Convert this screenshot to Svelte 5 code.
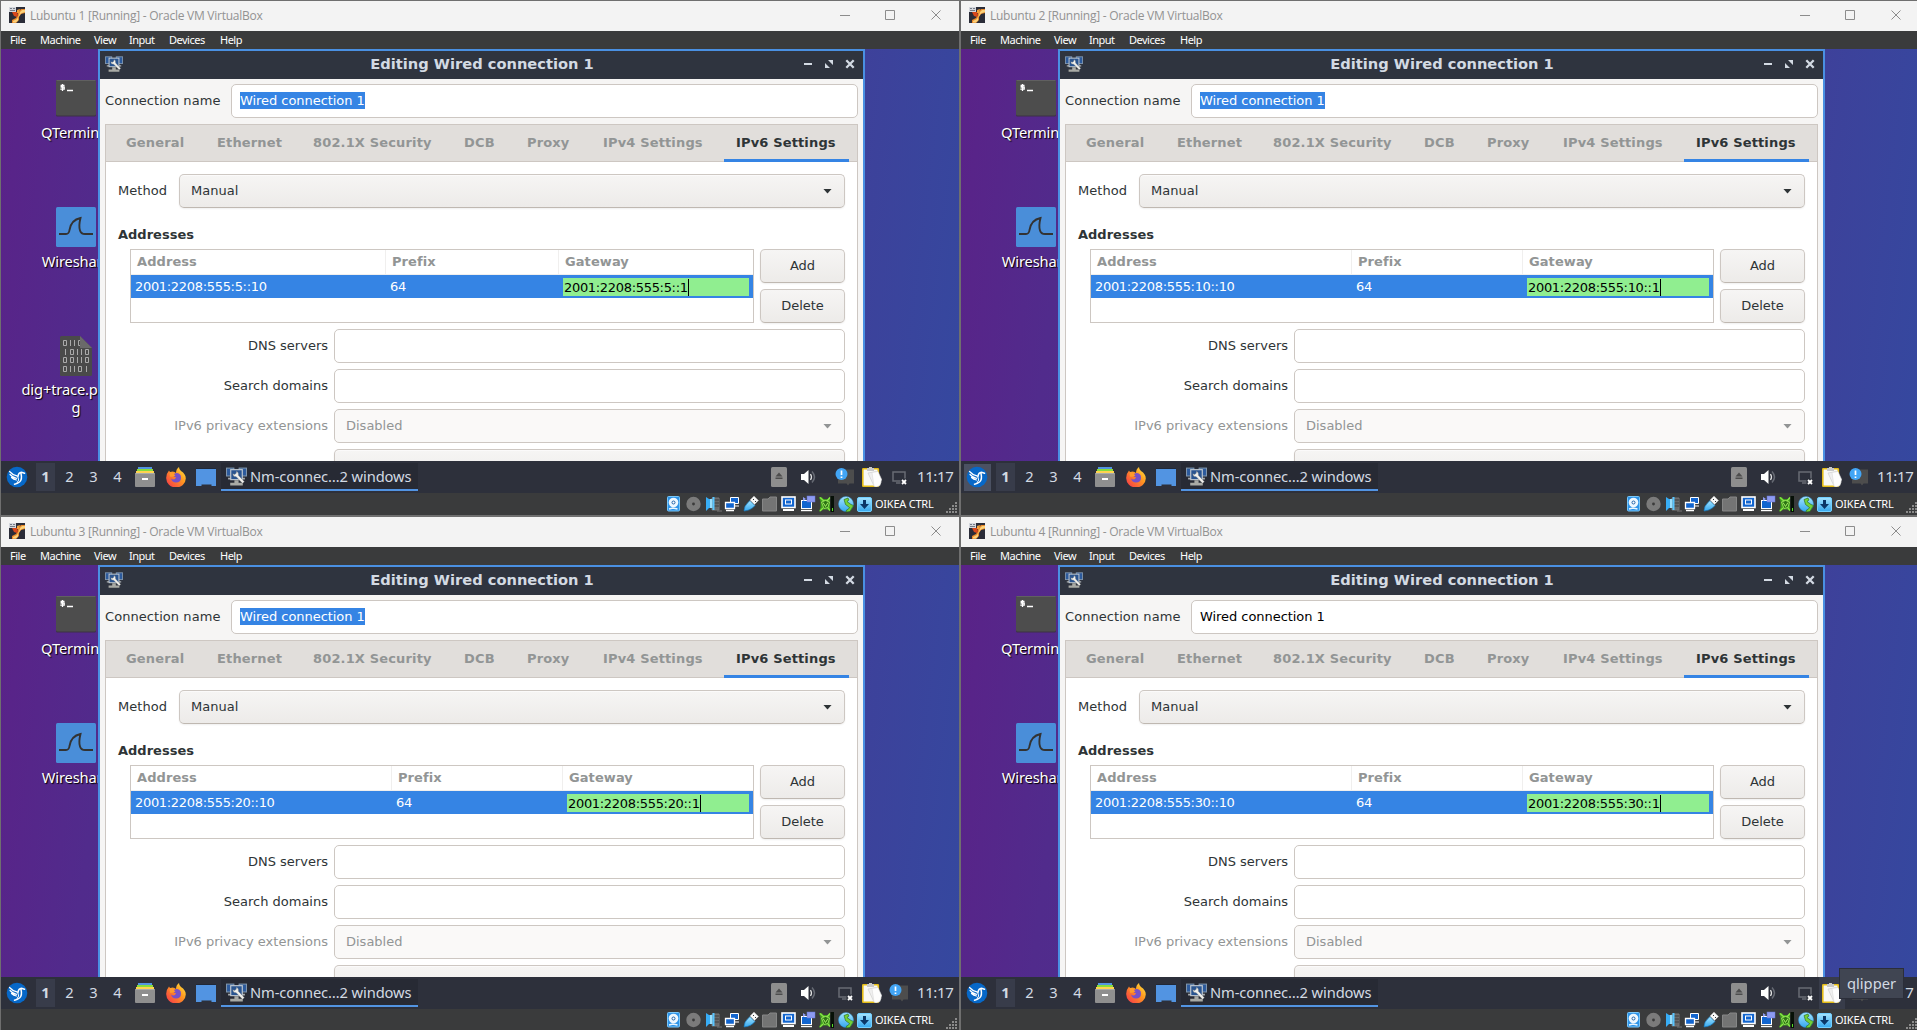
<script>
  const machines = [
    { id: 1, address: '2001:2208:555:5::10', gateway: '2001:2208:555:5::1', cols: [255, 173], selected: true, files: true, tray: ['notice', 'clip', 'net'] },
    { id: 2, address: '2001:2208:555:10::10', gateway: '2001:2208:555:10::1', cols: [261, 171], selected: true, startHover: true, tray: ['net', 'clip', 'notice'] },
    { id: 3, address: '2001:2208:555:20::10', gateway: '2001:2208:555:20::1', cols: [261, 171], selected: true, tray: ['net', 'clip', 'notice'] },
    { id: 4, address: '2001:2208:555:30::10', gateway: '2001:2208:555:30::1', cols: [261, 171], selected: false, tip: true, tray: ['net', 'clip', 'notice'] }
  ];
  const menu = ['File', 'Machine', 'View', 'Input', 'Devices', 'Help'];
  const tabs = ['General', 'Ethernet', '802.1X Security', 'DCB', 'Proxy', 'IPv4 Settings', 'IPv6 Settings'];
</script>

{#snippet vboxIcon()}
  <svg class="vbox" width="16" height="16" viewBox="0 0 16 16">
    <rect width="16" height="16" fill="#2a2c38" />
    <path d="M16 2v4l-4 1-2 3v3l-3 3H3v-3l4-2 2-3V5l3-3z" fill="#e8892b" />
    <path d="M16 3v2l-4 1.500-3 4v3l-2 2H4v-1.500l4-2 2-4 1-3 2-2z" fill="#fbd27a" />
    <path d="M3 5h5l1 3-1 2-3-1z" fill="#d8481d" />
    <path d="M8 3l3-1-1 4H8z" fill="#f4a23a" />
    <rect width="7" height="5" fill="#d5d8de" />
    <path d="M1 1.500h2M4 1.500h2M1 3.500h5" stroke="#777d88" />
  </svg>
{/snippet}

{#snippet netTool(size)}
  <svg width={size} height={size} viewBox="0 0 20 20">
    <rect x="0.500" y="2" width="7" height="7.500" fill="#2c5a9c" stroke="#7f95ad" />
    <rect x="12.500" y="2" width="7" height="7.500" fill="#2c5a9c" stroke="#7f95ad" />
    <path d="M2 12h3.500M14.500 12H18" stroke="#a9adb0" stroke-width="1.500" />
    <rect x="4.500" y="3.500" width="11" height="9.500" fill="#2a5591" stroke="#c2cad1" stroke-width="1.100" />
    <path d="M8 13.500h4v2.500h4v2.500H4V16h4z" fill="#a9aaa5" />
    <path d="M10 5l-.3 2-1.500 1-1.700-.6q0 3 3.200 2.800l6 6.300 1.800-1.600-5.700-6.100Q12.300 6 10 5z" fill="#f1f1ed" stroke="#6c7074" stroke-width="0.400" />
  </svg>
{/snippet}

{#snippet trayIcon(name)}
  {#if name === 'notice'}
    <svg width="20" height="20" viewBox="0 0 20 20">
      <path d="M3 2.500h16v14h-4.500L13 18.500l-1.500-2H3z" fill="#4d4d4d" />
      <circle cx="6.500" cy="7" r="6" fill="#42a5f5" />
      <path d="M6.500 3.500V8M6.500 9.500V11" stroke="#fff" stroke-width="1.700" />
    </svg>
  {:else if name === 'clip'}
    <svg width="20" height="20" viewBox="0 0 20 20">
      <rect x="0.800" y="1.800" width="15.500" height="17.400" rx="0.500" fill="#f8f8f6" stroke="#e5bd17" stroke-width="1.600" />
      <path d="M5 1h2V0h3v1h2v3H5z" fill="#c9c9c9" />
      <path d="M6 6l8.500-1.500L19 16l-2.500 2-4.500 1z" fill="#efefef" stroke="#c9c9c9" stroke-width="0.600" />
      <path d="M10 5.500l6-1 3.700 8-1.700 6-4 1.500-2-1z" fill="#fdfdfd" stroke="#d5d5d5" stroke-width="0.500" />
    </svg>
  {:else}
    <svg width="15" height="15" viewBox="0 0 15 15">
      <path d="M1 2h12v9H1zM4 13h6" fill="none" stroke="#686b74" stroke-width="1.500" />
      <rect x="8.500" y="8.500" width="6.500" height="6.500" fill="#2d303b" />
      <path d="M10 10l4 4M14 10l-4 4" stroke="#fff" stroke-width="1.800" />
    </svg>
  {/if}
{/snippet}

<svg class="defs" width="0" height="0">
  <defs>
    <linearGradient id="fox" x1="1" y1="0" x2="0" y2="1">
      <stop offset="0" stop-color="#fff04a" /><stop offset="0.400" stop-color="#ff9a1f" /><stop offset="1" stop-color="#f5304e" />
    </linearGradient>
    <linearGradient id="aqua" x1="0" y1="0" x2="0" y2="1">
      <stop offset="0" stop-color="#a5e4ff" /><stop offset="1" stop-color="#35a8ef" />
    </linearGradient>
  </defs>
</svg>

<main>
  {#each machines as m (m.id)}
    <section class="vm">
      <header class="title">
        {@render vboxIcon()}
        <span>Lubuntu {m.id} [Running] - Oracle VM VirtualBox</span>
        <svg class="controls" width="102" height="12" viewBox="0 0 102 12">
          <path d="M0 6.500h10M45.500 1.500h9v9h-9zM91.500 1.500l9 9M100.500 1.500l-9 9" fill="none" stroke="#8c8c8c" />
        </svg>
      </header>
      <nav class="menu">
        {#each menu as item}<span>{item}</span>{/each}
      </nav>

      <div class="guest">
        <div class="shortcuts">
          <div class="shortcut">
            <svg width="40" height="40" viewBox="0 0 40 40">
              <rect y="2" width="40" height="36.500" rx="1.500" fill="#3c3244" />
              <rect y="2" width="40" height="35.500" rx="1.500" fill="#4d4d4d" />
              <path d="M0.500 2.500h39" stroke="#606060" />
              <path d="M8.500 7.500H5.200v1.700h3v2H4.300M6.500 6v7M11 12.500h6" fill="none" stroke="#fff" stroke-width="1.300" />
            </svg>
            <span>QTerminal</span>
          </div>
          <div class="shortcut">
            <svg width="40" height="40" viewBox="0 0 40 40">
              <rect width="40" height="40" rx="1.500" fill="#4a8ed9" />
              <path d="M3 27h7q3 0 3.500-4Q15 13 24.500 11q-2 8-.5 12.500Q25 27 29 27h8" fill="none" stroke="#333" stroke-width="1.900" />
            </svg>
            <span>Wireshark</span>
          </div>
          {#if m.files}
            <div class="shortcut">
              <svg width="40" height="40" viewBox="0 0 40 40">
                <path d="M4 1.500Q4 0 5.500 0H24l12 12v26.500q0 1.500-1.500 1.500h-29Q4 40 4 38.500z" fill="#4a4a4a" />
                <path d="M24 0l12 12H24z" fill="#6a6a6a" />
                <path d="M7.500 4.500h3v5h-3zM14.500 4v6M18.500 4v6M24 4.500h-1.500v5H24M9.500 13v6M14.500 13.500h3v5h-3zM21.500 13v6M25.500 13v6M29.500 13.500h3v5h-3zM7.500 21.500h3v5h-3zM14.500 21.500h3v5h-3zM21.500 21v6M25.500 21v6M29.500 21.500h3v5h-3zM7.500 30.500h3v5h-3zM14.500 30v6M18.500 30v6M22.500 30.500h3v5h-3zM30.500 30v6" fill="none" stroke="#aaa" />
              </svg>
              <span>dig+trace.pcapn<br />g</span>
            </div>
          {/if}
        </div>

        <div class="dialog">
          <div class="dialog-bar">
            {@render netTool(18)}
            <h2>Editing Wired connection 1</h2>
            <svg width="52" height="10" viewBox="0 0 52 10">
              <g fill="none" stroke="#d3dae3">
                <path d="M1 5h8" stroke-width="2" />
                <path d="M43.300 1.300l7.400 7.400M50.700 1.300l-7.400 7.400" stroke-width="2.300" />
              </g>
              <path d="M25 1h5v5zM22 4v5h5z" fill="#d3dae3" />
            </svg>
          </div>

          <div class="name-row">
            <span class="name-label">Connection name</span>
            <div class="entry"><span class:selected={m.selected}>Wired connection 1</span></div>
          </div>

          <div class="notebook">
            <div class="tabs">
              {#each tabs as tab, i}<span class:active={i === 6}>{tab}</span>{/each}
            </div>
            <div class="page">
              <div class="method">
                <span>Method</span>
                <div class="combo">Manual<i class="arrow"></i></div>
              </div>
              <h3>Addresses</h3>
              <div class="address-area">
                <div class="table" style="--c1: {m.cols[0]}px; --c2: {m.cols[1]}px">
                  <div class="thead"><span>Address</span><span>Prefix</span><span>Gateway</span></div>
                  <div class="trow">
                    <span>{m.address}</span><span>64</span>
                    <div class="cell-edit"><b>{m.gateway}</b></div>
                  </div>
                </div>
                <div class="buttons"><button>Add</button><button>Delete</button></div>
              </div>
              <div class="fields">
                <span>DNS servers</span><div class="entry"></div>
                <span>Search domains</span><div class="entry"></div>
                <span class="dim">IPv6 privacy extensions</span><div class="combo off">Disabled<i class="arrow"></i></div>
                <span class="mode">IPv6 address generation mode</span><div class="combo mode">Stable privacy<i class="arrow"></i></div>
              </div>
            </div>
          </div>
        </div>
      </div>

      <div class="panel">
        <div class="start" class:hover={m.startHover}>
          <svg width="22" height="22" viewBox="0 0 22 22">
            <circle cx="11" cy="11" r="10.300" fill="#0768c8" />
            <g fill="none" stroke="#fff" stroke-linecap="round">
              <path d="M3.500 5.500q3 3.500 8 4.700M4 8.500q2.500 3 6.500 3.800M5.500 11.500q2 2 5 2.500" stroke-width="1.200" />
              <path d="M12 10.500q.5-4 3.500-4.200l3 .9M15 7.500q1.500 6-1.500 8.500-2 1.500-5 2.200" stroke-width="1.500" />
              <path d="M12 11q2 3-1 6" stroke-width="1" />
            </g>
          </svg>
        </div>
        <div class="pager"><span class="current">1</span><span>2</span><span>3</span><span>4</span></div>
        <div class="launchers">
          <svg width="20" height="20" viewBox="0 0 20 20">
            <rect x="3" width="14" height="3" fill="#5294e2" />
            <rect x="2" y="2" width="16" height="3" fill="#86dc3d" />
            <rect x="1" y="4" width="18" height="3" fill="#ffd34f" />
            <rect y="6" width="20" height="14" rx="1" fill="#8f8f8f" />
            <path d="M0.500 6.500h19" stroke="#aaa" />
            <path d="M7 12h6" stroke="#fff" stroke-width="2" />
          </svg>
          <svg width="20" height="20" viewBox="0 0 20 20">
            <path d="M13 0q0 2.500 2 4 4.800 3 4.800 7.500A9.700 9 0 0 1 .2 11.200Q0 7 3 3.500L4 5q3-1 4.500 0L10 6q0-4 3-6z" fill="url(#fox)" />
            <path d="M10 6q5 0 5 4.500 0 5-5 5-4 0-5-4 2 1.500 4 .5l1-2q-2 0-3-1.500 1-2 3-2.500z" fill="#7651c9" />
            <path d="M4 5q-1 3 .5 5 3-.5 5-1.500Q8 8 8 6.500q0-2-4-1.500z" fill="#ff9b2b" />
          </svg>
          <svg width="20" height="20" viewBox="0 0 20 20">
            <path d="M0 2h20v17h-4.500v-1.500h-10V19H0z" fill="#5294e2" />
            <path d="M0 1.500h20" stroke="#202838" />
          </svg>
        </div>
        <div class="task">{@render netTool(21)}<span>Nm-connec…2 windows</span></div>
        <div class="tray">
          <svg class="eject" width="16" height="20" viewBox="0 0 16 20">
            <rect width="16" height="20" rx="1.500" fill="#8e8e8e" />
            <path d="M4.500 9.500l3.500-4 3.500 4zM4.500 10.500h7V12h-7z" fill="#4d4d4d" />
          </svg>
          <svg class="speaker" width="15" height="14" viewBox="0 0 15 14">
            <path d="M0 4h3l4.500-4v14L3 10H0z" fill="#fff" />
            <path d="M9.500 4q2 3 0 6" fill="none" stroke="#e0e0e0" stroke-width="1.300" />
            <path d="M11 1.500q5 5.500 0 11" fill="none" stroke="#666a73" stroke-width="1.500" />
          </svg>
          <div class="tray-set">
            {#each m.tray as t}
              <div class="slot" class:hot={m.tip && t === 'clip'}>{@render trayIcon(t)}</div>
            {/each}
          </div>
          <span class="clock">11:17</span>
        </div>
        {#if m.tip}<div class="tooltip">qlipper</div>{/if}
      </div>

      <footer class="status">
        <svg width="206" height="18" viewBox="0 0 206 18">
          <!-- hard disk -->
          <rect x="0.500" y="1.500" width="12" height="14.500" rx="1" fill="#2d93e8" stroke="#78c7fa" />
          <circle cx="6.500" cy="7.500" r="4.800" fill="#eef8ff" />
          <circle cx="6.500" cy="7.500" r="1.500" fill="#fff" stroke="#1c5fa8" />
          <path d="M2 14l4-1 4.500 1" stroke="#e8f6ff" stroke-width="1.500" fill="none" />
          <!-- optical disc -->
          <circle cx="26.500" cy="9" r="7.200" fill="#7b7b7b" /><circle cx="26.500" cy="9" r="1.400" fill="#3a3a3a" />
          <!-- audio -->
          <path d="M45 3h7v12h-7zM50 16h5" fill="#696969" stroke="#777" /><path d="M47 5h5M47 8h5M47 11h5" stroke="#3f3f3f" />
          <path d="M39 2l3 2h1v9h-1l-3 3z" fill="#38adf5" /><path d="M43 4h2.500v9H43z" fill="#9adefc" /><path d="M46.500 2v13" stroke="#58c5ff" stroke-width="2" />
          <!-- network -->
          <path d="M63.500 2.500h8v6h-8z" fill="#1265cf" stroke="#fff" /><path d="M68 11h4" stroke="#fff" />
          <path d="M58.500 7.500h9v6h-9z" fill="#1265cf" stroke="#fff" stroke-width="1.300" /><path d="M59 15.500h8" stroke="#fff" stroke-width="1.500" />
          <!-- usb -->
          <path d="M77 16q0-5 4-8.500l2-2 5 5q-4 5-11 5.500z" fill="url(#aqua)" stroke="#1876b8" stroke-width="0.700" />
          <path d="M83 5l4-4 4.500 4.500-4 4z" fill="#f7f7f7" stroke="#aaa" stroke-width="0.600" /><path d="M86 4l1 1M88 6l1 1" stroke="#333" />
          <!-- shared folder -->
          <path d="M95.500 5v-1H101l2-2h6.500v14h-14z" fill="#747474" stroke="#868686" />
          <!-- display -->
          <rect x="115" y="2" width="13" height="10.500" fill="#1265cf" stroke="#fff" stroke-width="1.600" /><rect x="118.500" y="5" width="6" height="4" fill="#1265cf" stroke="#fff" /><path d="M116 15h11" stroke="#fff" stroke-width="2" />
          <!-- recording -->
          <rect x="134.500" y="5.500" width="10" height="8" fill="#1265cf" stroke="#fff" /><path d="M134 15.500h11" stroke="#fff" stroke-width="1.400" />
          <rect x="140" y="1" width="8" height="6" fill="#8d9af1" stroke="#6673d4" stroke-width="0.500" /><path d="M136 2l3 2-3 2z" fill="#8d9af1" />
          <!-- processor -->
          <path d="M152 2h2.500l2 2h4l2.500-2.500V16l-3-1.500h-3.500L153 16.500h-1l1.500-4v-6z" fill="#3f9f1d" />
          <path d="M153 2.500l4 3.500h3l3-3.500M153 16l3-3M163 15.500l-2-2.500" stroke="#8be34a" fill="none" stroke-width="1.300" />
          <path d="M154.500 7l4-1.500 4 1.500-1.500 5.500-4 1z" fill="#2b7414" stroke="#a5f063" stroke-width="0.800" />
          <path d="M156 7.500l2.500 4 2.500-4" stroke="#a5f063" fill="none" />
          <rect x="163.500" y="1" width="3.500" height="16" fill="#071007" /><path d="M165.500 13v3" stroke="#56df25" />
          <!-- mouse integration -->
          <circle cx="179" cy="9" r="7.500" fill="url(#aqua)" stroke="#2c88c8" stroke-width="0.500" />
          <path d="M177 4.500l4-1.500 1 2-2 1.500 4 3 2.500 1-3.500 6-4 .5.500-2 1.500-.5 1.500-2-4-3z" fill="#74d13a" stroke="#225f19" stroke-width="0.600" />
          <!-- host key -->
          <rect x="190.500" y="2.500" width="14" height="14" rx="1.500" fill="url(#aqua)" stroke="#72cfff" /><path d="M196 5h3v4h3l-4.500 5L193 9h3z" fill="#0b3768" />
        </svg>
        <span>OIKEA CTRL</span>
        <svg class="grip" width="12" height="12" viewBox="0 0 12 12">
          <path d="M9 1h2M9 4h2M6 4h2M9 7h2M6 7h2M3 7h2M9 10h2M6 10h2M3 10h2M0 10h2" stroke="#8b8b8b" stroke-width="2" />
        </svg>
      </footer>
    </section>
  {/each}
</main>

<style>
  :global(body) { margin: 0; overflow: hidden; background: #6f6f6f; }
  * { box-sizing: border-box; }
  svg { display: block; flex: none; }
  .defs { position: absolute; }
  main {
    width: 1917px; height: 1030px; overflow: hidden;
    display: grid; grid-template: 516px 516px / 960px 960px;
    font-family: 'DejaVu Sans', sans-serif; font-size: 13px; color: #2e3436;
  }
  .vm { border: 1px solid #6f6f6f; display: flex; flex-direction: column; overflow: hidden; }

  .title {
    height: 30px; flex: none; background: #f3f3f3; display: flex; align-items: center;
    padding: 0 17px 2px 8px; gap: 5px; color: #929292;
    font-family: 'Open Sans', sans-serif; font-size: 12px; white-space: nowrap;
  }
  .title span { letter-spacing: -0.250px; }
  .controls { margin-left: auto; }
  .menu {
    height: 18px; flex: none; background: #3a3b3c; color: #fff; padding-left: 9px;
    display: grid; grid-template-columns: 30px 54px 35px 40px 51px 40px; line-height: 18px;
    font-family: 'Noto Sans', sans-serif; font-size: 11px; letter-spacing: -0.500px;
  }

  .guest {
    height: 412px; flex: none; position: relative; overflow: hidden;
    background: linear-gradient(97deg, #5a2288 0%, #512b8c 12%, #403f99 82%, #35489f 100%);
  }
  .shortcuts { width: 150px; padding-top: 29px; }
  .shortcut {
    height: 129px; display: flex; flex-direction: column; align-items: center; gap: 5px;
    color: #fff; font: 14.700px/18px 'Noto Sans', sans-serif; letter-spacing: -0.150px;
    text-align: center; text-shadow: 1px 1px 1px #000;
  }
  .shortcut span { white-space: nowrap; }
  .shortcut:nth-child(3) span { margin-top: -1px; }

  .dialog {
    position: absolute; left: 97px; top: 0; width: 767px; height: 470px;
    border: 2px solid #4a90e2; border-bottom: 0; background: #f6f5f4;
  }
  .dialog-bar {
    height: 28px; background: #2f343f; display: flex; align-items: center;
    justify-content: space-between; padding: 0 8px 2px 5px;
  }
  h2 { margin: 0 0 0 38px; font-size: 14.670px; line-height: 18px; color: #d3dae3; }
  .name-row { display: flex; align-items: center; padding: 5px 5px 0; height: 39px; }
  .name-label { width: 126px; padding-bottom: 2px; letter-spacing: 0.060px; }
  .name-row .entry { flex: 1; }
  .entry { height: 34px; border: 1px solid #cdc7c2; border-radius: 5px; background: #fff; padding: 0 0 1px 8px; display: flex; align-items: center; color: #000; }
  .entry span { height: 17px; line-height: 17px; letter-spacing: -0.050px; }
  .entry .selected { background: #3584e4; color: #fff; }

  .notebook { margin: 6px 5px 0; border: 1px solid #cdc7c2; height: 400px; background: #fff; }
  .tabs {
    height: 37px; background: #e1dedb; border-bottom: 1px solid #cdc7c2; padding-left: 8px;
    display: grid; grid-template-columns: 91px 96px 151px 63px 76px 133px 125px;
    line-height: 35px; font-weight: bold; color: #929595; letter-spacing: 0.150px;
  }
  .tabs span { padding-left: 12px; white-space: nowrap; height: 37px; }
  .tabs .active { color: #2e3436; border-bottom: 3px solid #3584e4; }
  .page { padding: 12px 12px 0; }
  .method { display: flex; align-items: center; }
  .method span { width: 61px; padding-bottom: 2px; letter-spacing: 0.060px; }
  .method .combo { flex: 1; }
  .combo {
    height: 34px; border: 1px solid #cdc7c2; border-bottom-color: #bfb8b1; border-radius: 5px;
    background: linear-gradient(#f6f5f4, #edebe9); padding: 0 12px 2px 11px;
    display: flex; align-items: center; justify-content: space-between;
    box-shadow: inset 0 1px #fbfafa, 0 1px 2px #0001;
  }
  .combo.off { background: #faf9f8; color: #929595; box-shadow: none; border-color: #cdc7c2; }
  .arrow { width: 9px; height: 5px; margin-top: 2px; background: currentColor; clip-path: polygon(0 0, 100% 0, 50% 100%); }
  h3 { margin: 16px 0 0; font-size: 13px; line-height: 21px; height: 25px; }
  .address-area { margin-left: 12px; height: 74px; display: flex; gap: 6px; }
  .table { width: 624px; border: 1px solid #cdc7c2; }
  .thead, .trow { display: grid; grid-template-columns: var(--c1) var(--c2) 1fr; }
  .thead { height: 25px; line-height: 23px; font-weight: bold; color: #929595; letter-spacing: 0.080px; }
  .thead span { padding-left: 6px; border-right: 1px solid #f0efee; border-bottom: 1px solid #f0efee; }
  .thead span:last-child { border-right: 0; }
  .trow { height: 23px; line-height: 23px; background: #3584e4; color: #fff; letter-spacing: -0.320px; }
  .trow > span { padding-left: 4px; }
  .cell-edit { margin: 3px 4px 2px 4px; background: #90ee90; color: #000; line-height: 17px; padding-left: 1px; }
  .cell-edit b { font-weight: normal; border-right: 1px solid #000; display: inline-block; height: 17px; margin-top: 1px; }
  .buttons { flex: 1; display: grid; gap: 6px; }
  button {
    font: inherit; color: inherit; border: 1px solid #cdc7c2; border-bottom-color: #bfb8b1; border-radius: 5px; padding: 0 0 2px;
    background: linear-gradient(#f6f5f4, #edebe9); box-shadow: 0 1px 2px #0001;
  }
  .fields { margin-top: 6px; display: grid; grid-template-columns: 210px 511px; column-gap: 6px; row-gap: 6px; align-items: center; }
  .fields > span { text-align: right; padding-bottom: 2px; white-space: nowrap; }
  .fields > .mode { padding-bottom: 0; }
  .dim { color: #929595; }

  .panel {
    height: 32px; flex: none; background: #2d303b; display: flex; position: relative; color: #d3dae3;
    font-family: 'Noto Sans', sans-serif; font-size: 14.700px;
  }
  .start { width: 27px; height: 27px; margin: 3px 5px 0 3px; display: grid; place-items: center; }
  .start.hover { background: #4b5162; }
  .start svg { margin: -1px 1px 0 0; }
  .pager { display: flex; gap: 5px; padding-top: 2px; }
  .pager span { width: 19px; height: 28px; line-height: 27px; text-align: center; }
  .pager .current { background: #383c4a; font-weight: bold; }
  .launchers { display: flex; gap: 10.500px; margin-left: 8px; padding-top: 6px; }
  .task {
    width: 197px; height: 28px; margin: 2px 0 0 5px; padding-left: 5px; background: #272a34;
    border-bottom: 2px solid #5294e2; display: flex; align-items: center; gap: 3px; white-space: nowrap;
  }
  .task span { letter-spacing: -0.110px; margin-top: -1px; }
  .tray { margin-left: auto; display: flex; align-items: center; }
  .eject { margin-right: 14px; }
  .speaker { margin-right: 16px; }
  .tray-set { display: flex; gap: 1px; height: 32px; }
  .slot { width: 26px; display: grid; place-items: center; }
  .slot.hot { background: #383c4a; }
  .clock { width: 36px; margin: 0 6px 2px 5px; font-size: 15px; letter-spacing: -0.400px; white-space: nowrap; }
  .tooltip {
    position: absolute; left: 878px; top: -9px; width: 65px; height: 31px; border: 1px solid #2b2e39;
    background: #404552; line-height: 28px; text-align: center; color: #d3dae3;
  }

  .status {
    height: 22px; flex: none; background: #3a3b3c; color: #fff; display: flex; align-items: center; padding: 0 1px 1px 666px;
    font-family: 'Noto Sans', sans-serif; font-size: 11px;
  }
  .status span { margin-left: 2px; letter-spacing: -0.240px; white-space: nowrap; }
  .grip { margin: 9px 0 0 auto; }
</style>
